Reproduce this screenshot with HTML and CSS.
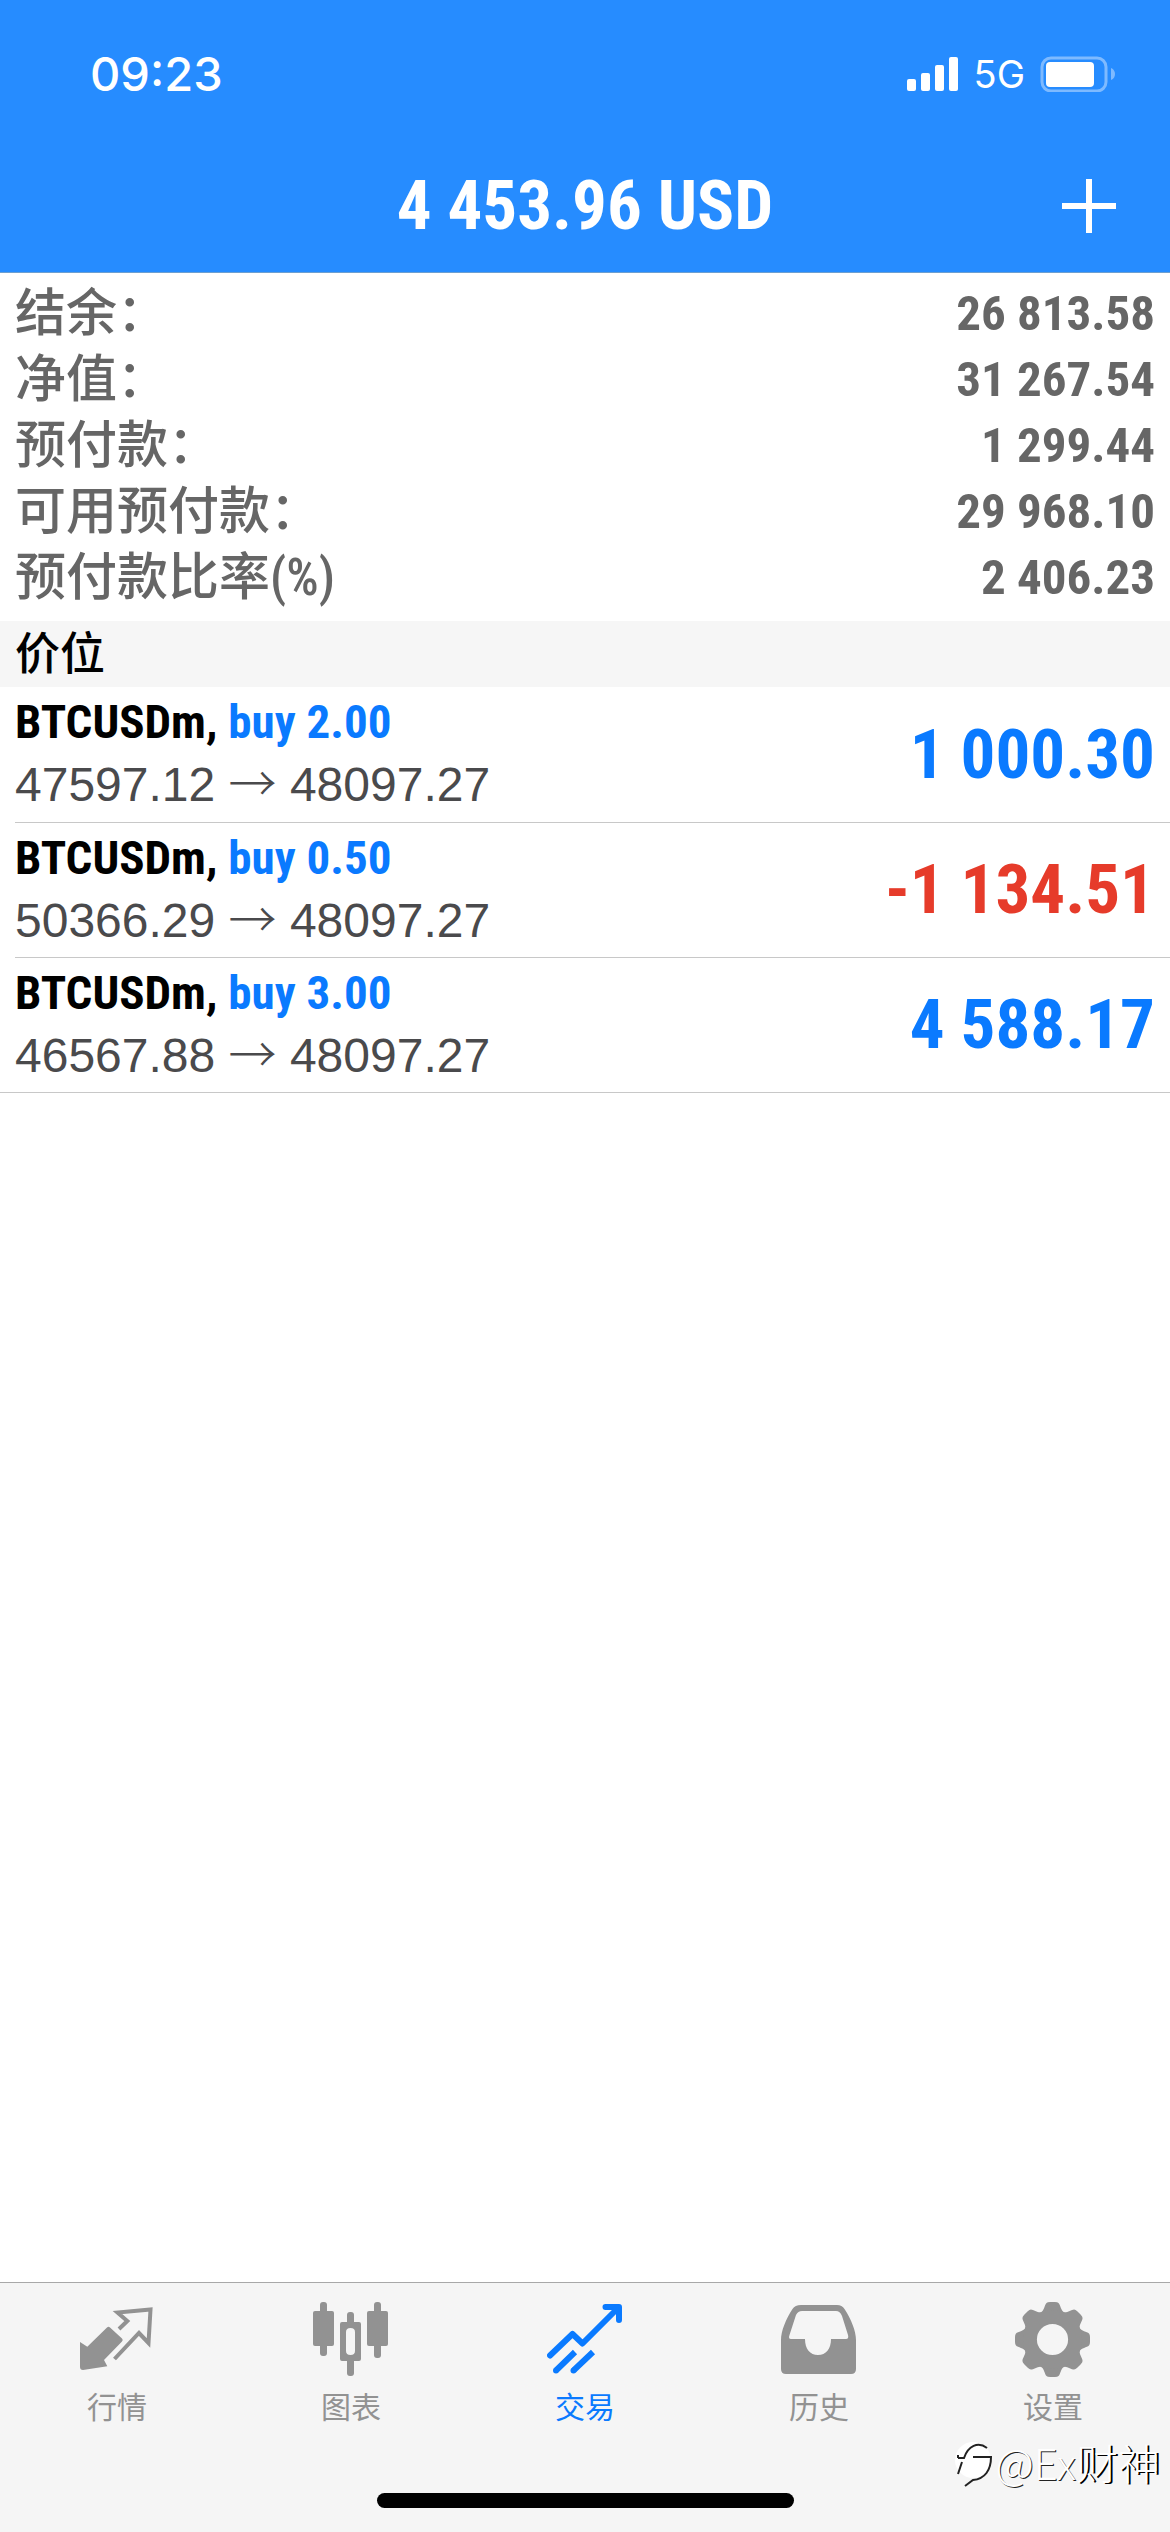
FILE: index.html
```html
<!DOCTYPE html>
<html lang="zh-CN">
<head>
<meta charset="utf-8">
<meta name="viewport" content="width=device-width, initial-scale=1">
<title>交易</title>
<link rel="stylesheet" href="styles.css">
</head>
<body>
<header class="header">
  <div class="status">
    <span class="status-time">09:23</span>
    <div class="status-right">
      <svg class="signal" viewBox="0 0 52 36" aria-hidden="true">
        <rect x="0" y="23" width="9" height="12" rx="2"/>
        <rect x="14" y="17" width="9" height="18" rx="2"/>
        <rect x="28" y="9" width="9" height="26" rx="2"/>
        <rect x="42" y="1" width="9" height="34" rx="2"/>
      </svg>
      <span class="network">5G</span>
      <svg class="battery" viewBox="0 0 76 36" aria-hidden="true">
        <rect class="battery-shell" x="2" y="2" width="64" height="33" rx="9"/>
        <rect x="6" y="6" width="48" height="25" rx="4"/>
        <path class="battery-nub" d="M71 12c3 1 4 4 4 6s-1 5-4 6z"/>
      </svg>
    </div>
  </div>
  <div class="titlebar">
    <h1 class="title">4 453.96 USD</h1>
    <button class="add" type="button" aria-label="新订单">
      <svg class="add-icon" viewBox="0 0 54 54" aria-hidden="true"><path d="M27 0V54M0 27H54"/></svg>
    </button>
  </div>
</header>

<main class="content">
  <dl class="summary">
    <div class="summary-row"><dt>结余：</dt><dd>26 813.58</dd></div>
    <div class="summary-row"><dt>净值：</dt><dd>31 267.54</dd></div>
    <div class="summary-row"><dt>预付款：</dt><dd>1 299.44</dd></div>
    <div class="summary-row"><dt>可用预付款：</dt><dd>29 968.10</dd></div>
    <div class="summary-row"><dt>预付款比率(%)</dt><dd>2 406.23</dd></div>
  </dl>
  <h2 class="section-title">价位</h2>
  <ul class="positions">
    <li class="position">
      <div class="position-info">
        <p class="symbol">BTCUSDm, <span class="side">buy 2.00</span></p>
        <p class="prices">47597.12 <span class="arrow">→</span> 48097.27</p>
      </div>
      <span class="profit">1 000.30</span>
    </li>
    <li class="position">
      <div class="position-info">
        <p class="symbol">BTCUSDm, <span class="side">buy 0.50</span></p>
        <p class="prices">50366.29 <span class="arrow">→</span> 48097.27</p>
      </div>
      <span class="profit loss">-1 134.51</span>
    </li>
    <li class="position">
      <div class="position-info">
        <p class="symbol">BTCUSDm, <span class="side">buy 3.00</span></p>
        <p class="prices">46567.88 <span class="arrow">→</span> 48097.27</p>
      </div>
      <span class="profit">4 588.17</span>
    </li>
  </ul>
</main>

<footer class="footer">
  <nav class="tabs">
    <a class="tab" href="#quotes">
      <svg class="tab-icon" viewBox="0 0 76 76" aria-hidden="true">
        <path class="solid" d="M1 40L8.300 44.700 28 25.500Q29.500 24 31 25.500L43 36.500Q44.500 38 43 39.500L25 58 28.300 64.300 4 68Q1 68 1 65Z"/>
        <path class="line" stroke-width="4" d="M40 27L48.300 19 38.500 10.500 71.500 7.500 69.500 41 60 31 35.500 57"/>
      </svg>
      <span>行情</span>
    </a>
    <a class="tab" href="#charts">
      <svg class="tab-icon" viewBox="0 0 76 76" aria-hidden="true">
        <g class="solid">
          <rect x="0" y="9" width="21" height="35" rx="2"/><rect x="7" y="0" width="7" height="54" rx="3"/>
          <rect x="54" y="9" width="21" height="35" rx="2"/><rect x="61" y="0" width="7" height="56" rx="3"/>
          <rect x="34" y="10" width="7" height="14" rx="3"/><rect x="34" y="56" width="7" height="18" rx="3"/>
          <path fill-rule="evenodd" d="M29 20H46Q48 20 48 22V57Q48 59 46 59H29Q27 59 27 57V22Q27 20 29 20ZM37.500 26Q33 26 33 30V49Q33 53 37.500 53T42 49V30Q42 26 37.500 26Z"/>
        </g>
      </svg>
      <span>图表</span>
    </a>
    <a class="tab active" href="#trade" aria-current="page">
      <svg class="tab-icon" viewBox="0 0 76 76" aria-hidden="true">
        <path class="line" stroke-width="6" stroke-linecap="round" stroke-linejoin="round" d="M3 53.500L25.500 32 35.500 41.500 71 6M58.500 5H72V18"/>
        <path class="line" stroke-width="6" d="M9.500 68L28 50M27 68L46 50"/>
        <circle class="solid" cx="9" cy="68.500" r="3"/><circle class="solid" cx="26.500" cy="68.500" r="3"/>
      </svg>
      <span>交易</span>
    </a>
    <a class="tab" href="#history">
      <svg class="tab-icon" viewBox="0 0 76 76" aria-hidden="true">
        <path class="solid" fill-rule="evenodd" d="M20 3H56Q61 3 63.500 7C70 17 75 29 75 38V67Q75 72 70 72H5Q0 72 0 67V38C0 29 5 17 11.500 7Q14 3 20 3ZM21 9Q17 9 15 13L8.500 33Q7 37 10 37H24C24 47 29 53 37 53S50 47 50 37H65Q68 37 67 33L61 14Q59 9 55 9Z"/>
      </svg>
      <span>历史</span>
    </a>
    <a class="tab" href="#settings">
      <svg class="tab-icon" viewBox="0 0 76 76" aria-hidden="true">
        <defs><path id="tooth" d="M26 10.300C29 9 29.500 3 31.500 1Q32.500 0 35 0H40Q42.500 0 43.500 1C45.500 3 46 9 49 10.300L46 17H29Z"/></defs>
        <g class="solid">
          <use href="#tooth"/><use href="#tooth" transform="rotate(45 37.500 37.500)"/>
          <use href="#tooth" transform="rotate(90 37.500 37.500)"/><use href="#tooth" transform="rotate(135 37.500 37.500)"/>
          <use href="#tooth" transform="rotate(180 37.500 37.500)"/><use href="#tooth" transform="rotate(225 37.500 37.500)"/>
          <use href="#tooth" transform="rotate(270 37.500 37.500)"/><use href="#tooth" transform="rotate(315 37.500 37.500)"/>
        </g>
        <circle class="line" stroke-width="14" cx="37.500" cy="37.500" r="22.600"/>
      </svg>
      <span>设置</span>
    </a>
  </nav>
  <div class="home-indicator"></div>
  <div class="watermark">
    <svg class="watermark-logo" viewBox="0 0 40 50" aria-hidden="true">
      <circle class="watermark-disc" cx="19" cy="23" r="18"/>
      <path class="watermark-line" d="M4 21H10C14 9 24 4 33 11M4 21V18M8 25L4 37M19 20H37C37 33 31 42 19 43L11 49"/>
    </svg>
    <span>@Ex<span class="watermark-name">财神</span></span>
  </div>
</footer>
</body>
</html>
```
FILE: styles.css
```css
:root {
  --blue: #0a7aff;
  --condensed: "Roboto Condensed", "Arial Narrow", "Liberation Sans", "Noto Sans CJK SC", sans-serif;
  --cjk: "Noto Sans CJK SC", sans-serif;
}

* { box-sizing: border-box; }

body {
  margin: 0;
  min-height: 100vh;
  display: flex;
  flex-direction: column;
  background: #fff;
  font-family: var(--cjk);
}

h1, h2, p, ul, dl, dd { margin: 0; padding: 0; }

/* Header */
.header {
  background: #268cff;
  color: #fff;
  border-bottom: 1px solid #6d9fd0;
}

.status {
  display: flex;
  justify-content: space-between;
  align-items: center;
  padding: 38px 54px 0 90px;
  font-family: Inter, sans-serif;
}

.status-time { font-size: 47px; line-height: 72px; font-weight: 500; }
.status-right { display: flex; align-items: center; gap: 15px; }
.network { font-size: 38px; line-height: 72px; }
.signal { width: 52px; height: 36px; fill: #fff; }
.battery { width: 76px; height: 36px; fill: #fff; }
.battery-shell { fill: none; stroke: #7ebaff; stroke-width: 3; }
.battery-nub { fill: #7ebaff; }

.titlebar {
  display: grid;
  grid-template-columns: 1fr auto 1fr;
  align-items: center;
  padding: 56px 54px 26px;
}

.title {
  grid-column: 2;
  font: 700 69px/80px var(--condensed);
}

.add {
  justify-self: end;
  padding: 0;
  border: 0;
  background: none;
  line-height: 0;
}

.add-icon { width: 54px; height: 54px; stroke: #fff; stroke-width: 6; }

/* Account summary */
.content { flex: 1; }
.summary { padding: 8px 15px 10px; color: #666; }

.summary-row {
  display: flex;
  justify-content: space-between;
  font-family: var(--condensed);
  font-size: 51px;
  line-height: 66px;
  font-weight: 500;
}

.summary-row dd { font-size: 49px; font-weight: 700; }

.section-title {
  padding: 1px 15px 0;
  background: #f6f6f6;
  font: 500 45px/65px var(--condensed);
}

/* Open positions */
.positions { list-style: none; border-bottom: 1px solid #c8c8c8; }

.position {
  display: flex;
  justify-content: space-between;
  align-items: center;
  height: 135px;
  margin-left: 15px;
  padding-right: 15px;
}

.position + .position { border-top: 1px solid #c8c8c8; }

.position-info { padding-bottom: 3px; }
.symbol { font: 700 47px/63px var(--condensed); }
.side { color: var(--blue); }
.prices { font: 400 48px/63px "Liberation Sans", sans-serif; color: #4a4a4c; }
.arrow { font-family: var(--cjk); font-weight: 300; line-height: 1; }
.profit { font: 700 69px/80px var(--condensed); color: var(--blue); }
.loss { color: #e63b2a; }

/* Tab bar */
.footer {
  position: relative;
  border-top: 1px solid #a8a8a8;
  background: #f5f5f5;
}

.tabs { display: grid; grid-template-columns: repeat(5, 1fr); padding-top: 19px; }

.tab {
  display: flex;
  flex-direction: column;
  align-items: center;
  gap: 6px;
  color: #929292;
  font-size: 30px;
  line-height: 42px;
  text-decoration: none;
}

.active { color: var(--blue); }
.tab-icon { width: 76px; height: 76px; }
.solid { fill: currentColor; }
.line { fill: none; stroke: currentColor; }

.home-indicator {
  width: 417px;
  height: 15px;
  margin: 67px auto 24px;
  border-radius: 8px;
  background: #000;
}

.watermark {
  position: absolute;
  right: 10px;
  bottom: 40px;
  display: flex;
  align-items: center;
  gap: 2px;
  color: #fff;
  font-size: 42px;
  line-height: 60px;
  font-weight: 300;
  text-shadow: 1px 1px 0 #222;
}

.watermark-name { text-shadow: 2px 1px 0 #000; }
.watermark-logo { width: 40px; height: 50px; }
.watermark-disc { fill: #fff; }
.watermark-line { fill: none; stroke: #222; stroke-width: 2; }
```
